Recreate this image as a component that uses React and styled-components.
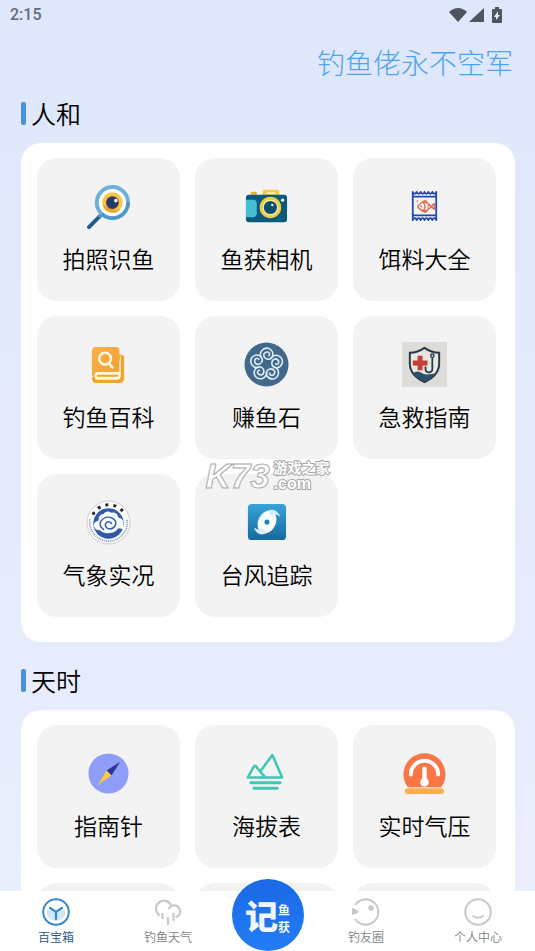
import React from "react";
import styled, { createGlobalStyle, css } from "styled-components";

const GlobalStyle = createGlobalStyle`
  * {
    box-sizing: border-box;
  }
  body {
    margin: 0;
    font-family: "Noto Sans CJK SC", "Liberation Sans", sans-serif;
    font-weight: 350;
    color: #000;
  }
`;

const Screen = styled.div`
  position: relative;
  height: 100vh;
  display: flex;
  flex-direction: column;
  background: linear-gradient(#dee7fb, #ebeffe);
`;

const StatusBar = styled.header`
  display: flex;
  align-items: center;
  justify-content: space-between;
  padding: 4px 33px 4px 10px;
  font-family: Roboto, sans-serif;
  font-size: 16px;
  line-height: 22px;
  font-weight: 500;
  color: #646a78;
`;

const StatusIcons = styled.div`
  display: flex;
  align-items: center;
  gap: 2px;
  svg:last-child {
    margin-left: 6px;
  }
`;

const Scroll = styled.main`
  flex: 1;
  min-height: 0;
  overflow-y: auto;
  scrollbar-width: none;
  padding: 12px 20px 20px 21px;
`;

const Slogan = styled.p`
  margin: 0;
  padding-right: 2px;
  text-align: right;
  font-size: 28px;
  line-height: 40px;
  font-weight: 300;
  color: #4da3ee;
`;

const Section = styled.section`
  margin-bottom: 7px;
`;

const SectionTitle = styled.h2`
  display: flex;
  align-items: center;
  gap: 5px;
  margin: 0;
  padding: 12px 0 10px;
  font-size: 25px;
  line-height: 39px;
  font-weight: 350;
  &::before {
    content: "";
    width: 5px;
    height: 23px;
    border-radius: 2px;
    background: #4a90dc;
  }
`;

const Panel = styled.div`
  display: grid;
  grid-template-columns: repeat(3, 1fr);
  gap: 15px;
  padding: 15px 19px 25px 16px;
  border-radius: 20px;
  background: #fff;
`;

const Tile = styled.button`
  display: flex;
  flex-direction: column;
  align-items: center;
  gap: 14px;
  height: 143px;
  padding: 26px 0 0;
  border: 0;
  border-radius: 20px;
  background: #f3f3f3;
  color: #000;
  font-family: inherit;
  font-size: 23px;
  line-height: 30px;
  font-weight: 350;
  cursor: pointer;
`;

const Nav = styled.nav`
  display: grid;
  grid-template-columns: 1fr 72px 1fr;
  height: 60px;
  background: #fff;
`;

const NavGroup = styled.div`
  display: flex;
  gap: 70px;
  padding: 7px 33px 0 38px;
  justify-content: ${(p) => (p.$end ? "flex-end" : "flex-start")};
`;

const NavLink = styled.a`
  display: flex;
  flex-direction: column;
  align-items: center;
  gap: 3px;
  font-size: 12px;
  line-height: 16px;
  white-space: nowrap;
  text-decoration: none;
  color: #7d7f83;
  ${(p) =>
    p.$active &&
    css`
      color: #235482;
    `}
`;

const RecordButton = styled.button`
  display: flex;
  align-items: center;
  justify-content: center;
  width: 72px;
  height: 72px;
  margin-top: -12px;
  padding: 0;
  border: 0;
  border-radius: 50%;
  background: linear-gradient(#1b69e6, #237cf6);
  color: #f0f7ff;
  font-family: inherit;
  font-size: 33px;
  line-height: 36px;
  font-weight: 900;
  cursor: pointer;
`;

const RecordSub = styled.span`
  display: flex;
  flex-direction: column;
  padding-top: 6px;
  font-size: 12px;
  line-height: 17px;
  font-weight: 700;
`;

const Watermark = styled.div`
  position: absolute;
  inset: 0;
  display: flex;
  align-items: center;
  justify-content: center;
  gap: 4px;
  pointer-events: none;
  font-family: "Liberation Sans", "Noto Sans CJK SC", sans-serif;
  font-weight: 700;
  color: #fff;
  -webkit-text-stroke: 1px #a9a9a9;
`;

const WatermarkName = styled.span`
  font-size: 35px;
  line-height: 36px;
  font-style: italic;
`;

const WatermarkSite = styled.span`
  display: flex;
  flex-direction: column;
  font-size: 14px;
  line-height: 16px;
  -webkit-text-stroke: 2px #a9a9a9;
  paint-order: stroke fill;
`;

const WatermarkDomain = styled.span`
  font-size: 16px;
`;

const Icon = ({ children, size = 45, box = 46 }) => (
  <svg width={size} height={size} viewBox={`0 0 ${box} ${box}`} fill="none" aria-hidden="true">
    {children}
  </svg>
);

const MagnifierIcon = () => (
  <Icon>
    <path d="M14 33 3 44" stroke="#245b88" strokeWidth="4" strokeLinecap="round" />
    <path d="m17 30-4 4" stroke="#4c8fb9" strokeWidth="3" />
    <circle cx="27" cy="19" r="16" fill="#fff" stroke="#6db0da" strokeWidth="4" />
    <path d="M16 30.5a16 16 0 0 0 27-12" stroke="#4c98c8" strokeWidth="3.5" />
    <circle cx="27" cy="19" r="10.5" fill="#fbc544" />
    <path d="M17 21a10.5 10.5 0 0 0 18 5c-6 1-12-1-18-5Z" fill="#eda429" />
    <circle cx="27" cy="19" r="6.5" fill="#273b68" />
    <circle cx="30.5" cy="17" r="1.8" fill="#fff" />
  </Icon>
);

const CameraIcon = () => (
  <Icon>
    <path d="M7 11V9q0-1 1-1h4q1 0 1 1v2" fill="#e8ad2d" />
    <path d="M19 12V8q0-2 2-2h13q2 0 2 2v4" fill="#f5cb43" />
    <path d="M23 9.5h9" stroke="#fff2a3" strokeWidth="2" />
    <rect x="2" y="11" width="42" height="28" rx="3" fill="#085b7c" />
    <path d="M2 16h7q4 0 4 4v10q0 4-4 4H2Z" fill="#45bfd8" />
    <circle cx="27" cy="24" r="9.5" fill="#075070" stroke="#f4cb45" strokeWidth="3" />
    <circle cx="27" cy="24" r="7.5" stroke="#fff2a3" strokeWidth="1.5" />
    <circle cx="29" cy="21.5" r="1.2" fill="#fff" />
    <circle cx="39.5" cy="16.5" r="1.7" fill="#e6fbff" />
  </Icon>
);

const BaitIcon = () => (
  <Icon>
    <path
      d="M11 8q2 4 4 0 2 4 4 0 2 4 4 0 2 4 4 0 2 4 4 0 2 4 4 0v29q-2-4-4 0-2-4-4 0-2-4-4 0-2-4-4 0-2-4-4 0-2-4-4 0ZM11 13h24M11 32h24"
      stroke="#2147ae"
      strokeWidth="1.8"
      strokeLinejoin="round"
    />
    <path
      d="M16 23q6-9 14 0l3-3v6l-3-3q-8 9-14 0ZM22 19q3 4 0 8M26 22h2M26 24h1M21 18l3-1 2 2M21 28l3 1 2-2"
      stroke="#e3694c"
      strokeWidth="1.4"
      strokeLinejoin="round"
    />
    <circle cx="19.5" cy="22.5" r="0.9" fill="#e3694c" />
    <path d="M15 17.5h1.5" stroke="#e3694c" strokeWidth="1.5" />
  </Icon>
);

const BookIcon = () => (
  <Icon>
    <defs>
      <linearGradient id="book" x2="1" y2="1">
        <stop stopColor="#f9b04a" />
        <stop offset="1" stopColor="#efa12a" />
      </linearGradient>
    </defs>
    <path d="M33 13h3q3 0 3 3v21q0 5-5 5H11q-5 0-5-5l4-7h22Z" fill="#f3a42f" />
    <path d="M35.500 12v22.500q0 4-4 4H12q-3.500 0-3.500-4t3.500-4h20Z" fill="#fdf4e2" />
    <path d="M10 5h21q3 0 3 3v22.500H12q-4 0-4 4 0 1 .5 2Q6 35.500 6 33V9q0-4 4-4Z" fill="url(#book)" />
    <path d="M12 34.500h20" stroke="#f3a42f" strokeWidth="1.800" strokeLinecap="round" />
    <circle cx="19.5" cy="17" r="6" stroke="#fff8e6" strokeWidth="2.6" />
    <path d="m23.500 22 3.500 4" stroke="#fff8e6" strokeWidth="2.6" strokeLinecap="round" />
  </Icon>
);

const StoneIcon = () => (
  <Icon>
    <circle cx="23" cy="23" r="22.5" fill="#41698b" />
    {[0, 72, 144, 216, 288].map((angle) => (
      <path
        key={angle}
        transform={`rotate(${angle} 23 23)`}
        d="M18 16.500q-2.500-4 0-7.500 3-3.500 7-2.500 5 2 4.500 7-1.500 5-6 4-4-1.500-3-5.500 2-2.500 4.500-1.500 2 1.500.5 3.500"
        stroke="#e0edf6"
        strokeWidth="1.6"
        strokeLinecap="round"
      />
    ))}
  </Icon>
);

const FirstAidIcon = () => (
  <Icon>
    <path d="M0 0h46v46H0Z" fill="#dedcd8" />
    <path d="M23 6q7 5 15 5v11q0 12-15 19Q8 34 8 22V11q8 0 15-5Z" fill="#e8e6e1" stroke="#24394b" strokeWidth="2" />
    <path d="M11 32q4-3 8-1 4 3 8 2 4 0 8-1-4 5-12 9-8-4-12-9Z" fill="#2c5069" />
    <path d="M16 14h5v5h5v5h-5v5h-5v-5h-5v-5h5Z" fill="#c63d35" />
    <circle cx="31" cy="14" r="1.7" stroke="#24394b" strokeWidth="1.5" />
    <path d="M31 16v11q0 4-3.500 4T24 27v-2" stroke="#24394b" strokeWidth="1.8" />
  </Icon>
);

const WeatherIcon = () => (
  <Icon>
    <circle cx="23" cy="23" r="22" fill="#fcfcfc" stroke="#cfcdc8" strokeWidth="1" />
    <path d="M4 20A19.2 19.2 0 1 0 42 20" stroke="#7d95c4" strokeWidth="1.8" strokeDasharray="1 1" />
    <path d="M7 15A18.5 18.5 0 0 1 40 15" stroke="#242424" strokeWidth="3" strokeDasharray="3 5.300" />
    <circle cx="23" cy="24" r="15.5" fill="#3158a8" />
    <path
      d="M14 31q-5 0-6-5 0-4 5-5-1-6 5-7 3-4 8-1 6-1 7 5 6 1 5 7 2 4 2 6-3-2-7-2-3 5-10 5-6 0-9-3Z"
      fill="#f9fcff"
    />
    <path
      d="M18 30q-5-3-3-8 4-6 11-4 6 3 4 8-3 5-8 3-4-3-1-6 3-2 5 1"
      stroke="#3158a8"
      strokeWidth="1.5"
      strokeLinecap="round"
    />
  </Icon>
);

const TyphoonIcon = () => (
  <Icon>
    <defs>
      <linearGradient id="typhoon" x2="0" y2="1">
        <stop stopColor="#37a4da" />
        <stop offset="1" stopColor="#1769a0" />
      </linearGradient>
    </defs>
    <rect x="4" y="4" width="39" height="37" rx="4" fill="url(#typhoon)" />
    <ellipse cx="23.5" cy="22.5" rx="9" ry="12" transform="rotate(25 23.5 22.5)" fill="#f7fcff" />
    <path
      d="M24 11q9-4 13 6-5-4-9-1ZM23 34q-9 4-13-6 5 4 9 1Z"
      fill="#d9eef9"
    />
    <circle cx="23.5" cy="22.5" r="2.6" fill="#1e7fb9" />
  </Icon>
);

const CompassIcon = () => (
  <Icon>
    <circle cx="23" cy="23" r="20.5" fill="#8f9cf8" />
    <path d="M35 11 21 20l5 5Z" fill="#303395" />
    <path d="M12 35l14-10-5-5Z" fill="#f7cc38" />
  </Icon>
);

const AltitudeIcon = () => (
  <Icon>
    <path
      d="m4 27 6-11q1-2 2.500 0l4 5L29 4l10 23H4Zm12.500-6 4.500 5"
      stroke="#41c6b8"
      strokeWidth="2.6"
      strokeLinejoin="round"
      strokeLinecap="round"
    />
    <path d="M7 32.5h30M10 38h24" stroke="#41c6b8" strokeWidth="3" strokeLinecap="round" />
  </Icon>
);

const PressureIcon = () => (
  <Icon>
    <path d="M6 37A21.5 21.5 0 1 1 40 37Z" fill="#fa7647" />
    <path d="M9 24a14 14 0 0 1 28 0" stroke="#fff" strokeWidth="4" strokeLinecap="round" />
    <path d="M23 18v14" stroke="#fff" strokeWidth="4.5" strokeLinecap="round" />
    <circle cx="23" cy="32" r="4.3" fill="#fff" />
    <rect x="3" y="38" width="40" height="6" rx="3" fill="#ffac52" />
  </Icon>
);

const BoxNavIcon = () => (
  <Icon size={28} box={28}>
    <circle cx="14" cy="14" r="12.8" fill="#fff" stroke="#3589cd" strokeWidth="2" />
    <path d="m5 11 9 4 9-4v6q-2 5-9 6-7-1-9-6Z" fill="#d2e8f9" />
    <path d="m8 10 6 4 6-4M14 14v7" stroke="#3589cd" strokeWidth="2.2" strokeLinecap="round" />
  </Icon>
);

const RainNavIcon = () => (
  <Icon size={28} box={28}>
    <path
      d="M5 17A8 8 0 1 1 17.500 8M15 10.500a6 6 0 1 1 7.500 8.500"
      stroke="#c7c9ce"
      strokeWidth="2.2"
      strokeLinecap="round"
    />
    <path d="M8.500 15v6M14 19v8M19.500 15v8" stroke="#c7c9ce" strokeWidth="2.2" />
  </Icon>
);

const FishNavIcon = () => (
  <Icon size={28} box={28}>
    <path d="M3 7a12.7 12.7 0 1 1 0 14" stroke="#c7c9ce" strokeWidth="2" />
    <path d="M0 10q3 0 7 4-4 3-7 3Z" fill="#c7c9ce" />
    <circle cx="19" cy="10" r="2.8" fill="#c7c9ce" />
  </Icon>
);

const FaceNavIcon = () => (
  <Icon size={28} box={28}>
    <circle cx="14" cy="14" r="12.8" stroke="#c7c9ce" strokeWidth="2" />
    <path d="M9 18q5 3.500 10 0" stroke="#c7c9ce" strokeWidth="2" strokeLinecap="round" />
  </Icon>
);

const people = [
  { label: "拍照识鱼", Art: MagnifierIcon },
  { label: "鱼获相机", Art: CameraIcon },
  { label: "饵料大全", Art: BaitIcon },
  { label: "钓鱼百科", Art: BookIcon },
  { label: "赚鱼石", Art: StoneIcon },
  { label: "急救指南", Art: FirstAidIcon },
  { label: "气象实况", Art: WeatherIcon },
  { label: "台风追踪", Art: TyphoonIcon },
];

const weather = [
  { label: "指南针", Art: CompassIcon },
  { label: "海拔表", Art: AltitudeIcon },
  { label: "实时气压", Art: PressureIcon },
];

const renderTile = ({ label, Art }) => (
  <Tile key={label} type="button">
    <Art />
    {label}
  </Tile>
);

const App = () => (
  <>
    <GlobalStyle />
    <Screen>
      <StatusBar>
        <span>2:15</span>
        <StatusIcons>
          <svg width="18" height="16" viewBox="0 0 18 16" fill="#50565f" aria-hidden="true">
            <path d="M9 15 0 5q9-8 18 0Z" />
          </svg>
          <svg width="15" height="16" viewBox="0 0 15 16" fill="#50565f" aria-hidden="true">
            <path d="M15 1v14H0Z" />
          </svg>
          <svg width="10" height="16" viewBox="0 0 10 16" fill="#50565f" aria-hidden="true">
            <path d="M3 0h4v2h2q1 0 1 1v12q0 1-1 1H1q-1 0-1-1V3q0-1 1-1h2Z" />
            <path d="M6 4 2 10h2v3l4-5H6Z" fill="#e7edfc" />
          </svg>
        </StatusIcons>
      </StatusBar>

      <Scroll>
        <Slogan>钓鱼佬永不空军</Slogan>
        <Section>
          <SectionTitle>人和</SectionTitle>
          <Panel>{people.map(renderTile)}</Panel>
        </Section>
        <Section>
          <SectionTitle>天时</SectionTitle>
          <Panel>
            {weather.map(renderTile)}
            <Tile type="button" />
            <Tile type="button" />
            <Tile type="button" />
          </Panel>
        </Section>
      </Scroll>

      <Watermark>
        <WatermarkName>K73</WatermarkName>
        <WatermarkSite>
          <span>游戏之家</span>
          <WatermarkDomain>.com</WatermarkDomain>
        </WatermarkSite>
      </Watermark>

      <Nav>
        <NavGroup>
          <NavLink href="#box" $active>
            <BoxNavIcon />
            百宝箱
          </NavLink>
          <NavLink href="#weather">
            <RainNavIcon />
            钓鱼天气
          </NavLink>
        </NavGroup>
        <RecordButton type="button">
          记
          <RecordSub>
            <span>鱼</span>
            <span>获</span>
          </RecordSub>
        </RecordButton>
        <NavGroup $end>
          <NavLink href="#friends">
            <FishNavIcon />
            钓友圈
          </NavLink>
          <NavLink href="#me">
            <FaceNavIcon />
            个人中心
          </NavLink>
        </NavGroup>
      </Nav>
    </Screen>
  </>
);

export default App;
